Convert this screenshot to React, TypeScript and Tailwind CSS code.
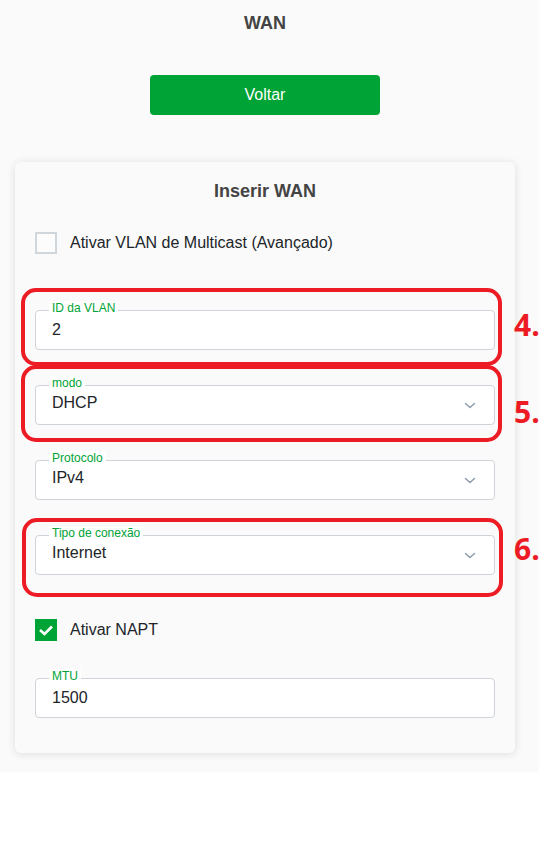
import type { ReactNode } from 'react';

const font = { fontFamily: '"Liberation Sans", Arial, sans-serif' };

function Chevron() {
  return (
    <svg width="12" height="7" viewBox="0 0 12 7" className="mt-1 shrink-0">
      <path d="M1.5 1.5 L6 5.5 L10.5 1.5" fill="none" stroke="#8a99ab" strokeWidth="1.4" strokeLinecap="round" strokeLinejoin="round" />
    </svg>
  );
}

function Checkbox({ checked, label }: { checked?: boolean; label: string }) {
  return (
    <div className="flex h-[22px] items-center gap-[13px]">
      {checked ? (
        <span className="flex h-[22px] w-[22px] items-center justify-center bg-[#00a335]">
          <svg width="22" height="22" viewBox="0 0 22 22">
            <path d="M5 11 L9.5 15 L17 7.5" fill="none" stroke="#fff" strokeWidth="2.6" />
          </svg>
        </span>
      ) : (
        <span className="h-[22px] w-[22px] border-2 border-[#cfd6dc] bg-[#fcfcfc]" />
      )}
      <span className="text-[16px] leading-[22px] text-[#212529]">{label}</span>
    </div>
  );
}

// marcação vermelha por cima do campo
function Mark({ n, box, num }: { n: string; box: string; num: string }) {
  return (
    <>
      <div className={`pointer-events-none absolute rounded-[15px] border-4 border-[#ed1c24] ${box}`} />
      <span
        className={`absolute left-[478px] text-[30px] font-bold leading-[30px] text-[#ed1c24] ${num}`}
        style={{ fontFamily: '"Open Sans", sans-serif' }}
      >
        {n}
      </span>
    </>
  );
}

function Field({
  label,
  value,
  select,
  className,
  children,
}: {
  label: string;
  value: string;
  select?: boolean;
  className?: string;
  children?: ReactNode;
}) {
  return (
    <div className={`relative h-10 rounded border border-[#ced4da] bg-white ${className ?? ''}`}>
      <span className="absolute -top-[10px] left-[13px] bg-white px-[3px] text-[12px] leading-[14px] text-[#00a335]">
        {label}
      </span>
      <div className={`flex h-full items-center pl-4 pr-[18px] text-[16px] text-[#212529] ${select ? 'pb-1' : 'pb-[1px]'}`}>
        <span className="flex-1">{value}</span>
        {select && <Chevron />}
      </div>
      {children}
    </div>
  );
}

export default function App() {
  return (
    <div className="min-h-[851px] bg-white" style={font}>
      <div className="w-[539px] bg-[#fafafa] pb-[19px] pt-3">
        <div className="flex w-[530px] flex-col items-center px-[15px]">
          <h1 className="text-[18px] font-bold leading-[22px] text-[#444]">WAN</h1>

          <button className="mt-[41px] h-10 w-[230px] rounded bg-[#00a335] text-[16px] text-white">Voltar</button>

          <div className="mt-[47px] w-[500px] rounded-md bg-[#fafafa] px-5 pb-[35px] pt-[18px] shadow-[0_1px_8px_rgba(0,0,0,0.12)]">
            <h2 className="text-center text-[18px] font-bold leading-[22px] text-[#444]">Inserir WAN</h2>

            <div className="mt-[30px]">
              <Checkbox label="Ativar VLAN de Multicast (Avançado)" />
            </div>

            <Field label="ID da VLAN" value="2" className="mt-[56px]">
              <Mark n="4." box="-top-[23px] -bottom-[17px] -left-[15px] -right-[8px]" num="-top-[1px]" />
            </Field>

            <Field label="modo" value="DHCP" select className="mt-[35px]">
              <Mark n="5." box="-top-[21px] -bottom-[18px] -left-[15px] -right-[8px]" num="top-[11px]" />
            </Field>

            <Field label="Protocolo" value="IPv4" select className="mt-[35px]" />

            <Field label="Tipo de conexão" value="Internet" select className="mt-[35px]">
              <Mark n="6." box="-top-[18px] -bottom-[23px] -left-[14px] -right-[9px]" num="-top-[2px]" />
            </Field>

            <div className="mt-[44px]">
              <Checkbox checked label="Ativar NAPT" />
            </div>

            <Field label="MTU" value="1500" className="mt-[37px]" />
          </div>
        </div>
      </div>
    </div>
  );
}
